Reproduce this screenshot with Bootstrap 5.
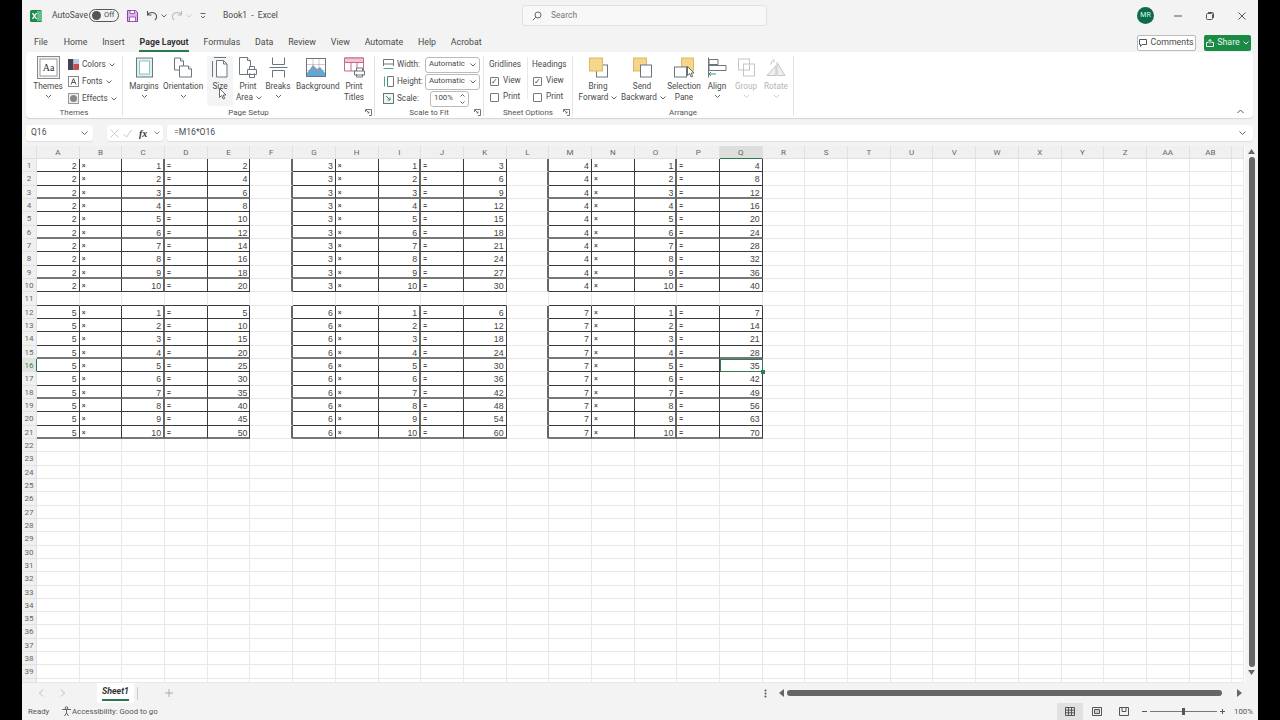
<!DOCTYPE html>
<html lang="en"><head><meta charset="utf-8"><title>Book1 - Excel</title>
<link href="https://cdn.jsdelivr.net/npm/bootstrap@5.3.0/dist/css/bootstrap.min.css" rel="stylesheet">
<style>
html,body{height:720px;overflow:hidden;background:#000}
body{font-family:Roboto,"Liberation Sans",sans-serif;font-size:8.5px;color:#4a4a4a;line-height:1.1}
svg{display:block;flex:none}
.xl-app{width:1236px;height:720px;background:#f3f3f3;margin:0 auto;position:relative}
.t-bar{height:31px;padding-left:8px}
.t-bar>*{flex:none}
.as-label{width:37px}
.as-toggle{width:30px;height:13px;border:1px solid #555;border-radius:7px;padding:0 2px;gap:3px;font-size:7.5px}
.as-knob{width:9px;height:9px;border-radius:50%;background:#555}
.t-doc{width:299px}
.t-search{width:245px;height:21px;background:#f8f8f8;border:1px solid #e2e2e2;border-radius:3px;padding-left:9px;gap:9px;color:#777}
.t-avatar{width:17px;height:17px;border-radius:50%;background:#0f6a4b;color:#cfe;font-size:7px;margin-left:370px}
.t-ctl{width:32px}
.tabs-bar{height:21px;padding-left:5.500px}
.rtab{padding:0 7.450px;height:21px;line-height:22px;flex:none;font-size:8.8px}
.rtab-on{font-weight:700;position:relative;color:#333}
.rtab-on::after{content:"";position:absolute;left:7px;right:7px;bottom:0;height:2px;background:#2b7a4b}
.act-btn{height:16px;border-radius:2px;gap:3px;flex:none;font-size:8.8px;margin-top:2px}
.act-cm{width:59px;border:1px solid #bbb;background:#fff;margin-left:auto}
.act-sh{width:47px;background:#1b8a45;color:#e6f5ea;margin:2px 7px 0 8px}
.rb{height:66px;background:#fff;margin:0 5px 0 4px;border-radius:4px;box-shadow:0 1px 1px #d4d4d4;position:relative}
.rb-grp{height:60px;margin-top:4px;border-right:1px solid #e3e3e3;flex:none;position:relative}
.rb-items{height:50px}
.rb-name{height:10px;text-align:center;color:#555;font-size:8px;line-height:14px;position:relative}
.rb-launch{position:absolute;right:2px;top:3px}
.rb-big{flex:none;text-align:center;font-size:8.2px;line-height:11px}
.rb-big>svg:first-child{margin:0 auto 2px;height:23px}
.rb-hover{background:#f4f4f4;border-radius:2px}
.rb-off{color:#b5b5b5}
.rb-row{height:17px;gap:3px;white-space:nowrap;font-size:8.2px}
.rb-combo{border:1px solid #bbb;border-radius:3px;height:16px;background:#fff;padding:0 3px;font-size:7.800px}
.rb-chk{gap:4px;height:16px;font-size:8.2px}
.rb-opt{font-size:8.2px}
.rb-box{width:9px;height:9px;border:1px solid #777;border-radius:1px;font-size:8px;line-height:7px;text-align:center;color:#444;background:#fff}
.chev{width:7px;height:5px;margin:2px auto 0}
.chev-in{display:inline;margin-left:3px}
.f-bar{height:16px;margin:7px 5px 5px 4px}
.f-box{background:#fff;height:16px;border-radius:3px;box-shadow:0 1px 1px #ddd;flex:none}
.f-name{width:67px;padding:0 5px}
.f-fx{width:56px;margin-left:14px;padding:0 3px;gap:4px;color:#333}
.f-fxt{font-family:"Liberation Serif",serif;font-size:10px;font-weight:700;margin:0 3px}
.f-text{margin-left:4px;flex:1;padding:0 7px;font-size:8.6px}
.x-grid{display:grid;width:1223px;grid-template-columns:15px repeat(28,42.7px) 12px;grid-template-rows:13px repeat(39,13.33px) 4px;background:#fff}
.x-c{border-right:1px solid #e8e8e8;border-bottom:1px solid #e8e8e8;font-family:"Liberation Sans",sans-serif;font-size:8.800px;line-height:14px;color:#444;padding:0 2px;white-space:nowrap;overflow:hidden;position:relative;text-align:right}
.x-op{text-align:left;font-size:6.500px;font-weight:700}
.x-hd{background:#f0f0f0;border-color:#e0e0e0;color:#666;text-align:center;font-family:Roboto,sans-serif;font-size:8px;padding:0;line-height:14px}
.x-sel{background:#dedede;color:#4f7460;border-bottom-color:#2b7a4b}
.x-selr{background:#dfe5df;color:#4f7460;border-right-color:#2b7a4b}
.x-dr{border-right-color:#3a3a3a}
.x-db{border-bottom-color:#3a3a3a}
.x-tr{border-right:2px solid #666}
.x-tb{border-bottom:2px solid #777}
.x-act{overflow:visible;outline:1.500px solid #2f7d50;outline-offset:-1px;z-index:2}
.x-act::after{content:"";position:absolute;right:-3px;bottom:-3px;width:4px;height:4px;background:#2f7d50}
.v-sb{width:13px;height:537px;background:#f3f3f3;padding:3px 0}
.v-thumb{width:6px;height:510px;background:#666;border-radius:3px;margin:3px auto}
.s-bar{height:20px}
.s-tab{width:37px;height:20px;background:#fff;margin-left:32px;text-align:center;font-style:italic;font-weight:700;color:#333;font-size:8.800px;line-height:17px;position:relative;border-radius:0 0 2px 2px}
.s-tab::after{content:"";position:absolute;left:5px;right:5px;bottom:2px;height:2px;background:#2b7a4b}
.h-thumb{width:435px;height:6px;border-radius:3px;background:#666}
.st-bar{height:17px;color:#555;font-size:7.800px}
.st-txt{padding-top:2px}
.st-view{width:26px;height:17px}
.st-on{background:#e1e1e1}
.z-track{width:67px;height:1px;background:#777;position:relative}
.z-thumb{position:absolute;left:32px;top:-3px;width:3px;height:7px;background:#555}
.cur{position:absolute;z-index:5}
</style></head>
<body>
<div class="xl-app d-flex flex-column">
 <!-- title bar -->
 <div class="t-bar d-flex align-items-center">
  <svg width="12" height="12" viewBox="0 0 12 12"><rect width="12" height="12" rx="1.500" fill="#1d8a4c"/><rect x="7" y="1" width="5" height="10" fill="#61c08a"/><path d="M2.500 3.200 6.500 8.800M6.500 3.200 2.500 8.800" stroke="#fff" stroke-width="1.300"/></svg>
  <span class="as-label" style="margin-left:10px">AutoSave</span>
  <span class="as-toggle d-flex align-items-center"><span class="as-knob"></span>Off</span>
  <svg style="margin-left:8px" width="11" height="12" viewBox="0 0 11 12"><path d="M.5.500h8l2 2v9H.5z" fill="#d9b8e8" stroke="#8b3fa8"/><path d="M3 .5h4.500v3H3zM2.500 7h6v4.500h-6z" fill="#fff" stroke="#8b3fa8" stroke-width=".8"/></svg>
  <svg style="margin-left:8px" width="12" height="11" viewBox="0 0 12 11" fill="none" stroke="#555" stroke-width="1.100"><path d="M1.500 1v4h4M1.500 5C3 2 8 1.500 10 4.500c1 2 .5 4-1 5.500"/></svg>
  <svg style="margin-left:3px" width="6" height="4" viewBox="0 0 6 4" fill="none" stroke="#666"><path d="m.5.500 2.500 2.500L5.500.5"/></svg>
  <svg style="margin-left:4px" width="12" height="11" viewBox="0 0 12 11" fill="none" stroke="#bbb" stroke-width="1.100"><path d="M10.500 1v4h-4M10.500 5C9 2 4 1.500 2 4.500c-1 2-.5 4 1 5.500"/></svg>
  <svg style="margin-left:3px" width="6" height="4" viewBox="0 0 6 4" fill="none" stroke="#ccc"><path d="m.5.500 2.500 2.500L5.500.5"/></svg>
  <svg style="margin-left:8px" width="6" height="6" viewBox="0 0 6 6" fill="none" stroke="#666"><path d="M.5.500h5M1 3l2 2 2-2"/></svg>
  <span class="t-doc" style="margin-left:17px">Book1 &nbsp;-&nbsp; Excel</span>
  <div class="t-search d-flex align-items-center"><svg width="10" height="10" viewBox="0 0 10 10" fill="none" stroke="#666"><circle cx="6" cy="4" r="3"/><path d="M3.800 6.200 .8 9.200"/></svg>Search</div>
  <div class="t-avatar d-flex align-items-center justify-content-center">MR</div>
  <div class="t-ctl ms-2 d-flex justify-content-center"><svg width="8" height="8" viewBox="0 0 8 8"><path d="M0 4h8" stroke="#555"/></svg></div>
  <div class="t-ctl d-flex justify-content-center"><svg width="8" height="8" viewBox="0 0 8 8" fill="none" stroke="#555"><rect x=".5" y="1.500" width="6" height="6" rx="1"/><path d="M2 .5h4.500a1 1 0 0 1 1 1V6"/></svg></div>
  <div class="t-ctl d-flex justify-content-center"><svg width="8" height="8" viewBox="0 0 8 8"><path d="m.5.500 7 7M7.500.500l-7 7" stroke="#555"/></svg></div>
 </div>
 <!-- tabs -->
 <div class="tabs-bar d-flex align-items-center">
  <span class="rtab" style="margin-left:-1px">File</span><span class="rtab" style="margin-left:1px">Home</span><span class="rtab">Insert</span><span class="rtab rtab-on">Page Layout</span><span class="rtab">Formulas</span><span class="rtab">Data</span><span class="rtab">Review</span><span class="rtab">View</span><span class="rtab">Automate</span><span class="rtab">Help</span><span class="rtab">Acrobat</span>
  <div class="act-btn act-cm d-flex align-items-center justify-content-center"><svg width="8" height="8" viewBox="0 0 8 8" fill="none" stroke="#555"><path d="M.5.500h7v5H3L1.500 7.500v-2h-1z"/></svg>Comments</div>
  <div class="act-btn act-sh d-flex align-items-center justify-content-center"><svg width="8" height="8" viewBox="0 0 8 8" fill="none" stroke="#e6f5ea"><path d="M.5 3.500h2M5.500 3.500h2v4h-7v-4M2 2.500l2-2 2 2M4 .5v4"/></svg>Share<svg width="6" height="4" viewBox="0 0 6 4" fill="none" stroke="#e6f5ea"><path d="m.5.500 2.500 2.500L5.500.5"/></svg></div>
 </div>
 <!-- ribbon -->
 <div class="rb d-flex">
  <div class="rb-grp" style="width:97px">
   <div class="rb-items d-flex">
    <div class="rb-big" style="width:38px;margin-left:3px">
     <svg width="23" height="23" viewBox="0 0 23 23"><rect x=".5" y=".5" width="22" height="22" fill="#f4f4f4" stroke="#888"/><rect x="3" y="3" width="17" height="17" fill="#fff" stroke="#999"/><text x="11.500" y="15" text-anchor="middle" font-size="10" font-family="Liberation Serif" fill="#333">Aa</text></svg>
     Themes<svg class="chev" viewBox="0 0 7 5" fill="none" stroke="#666"><path d="m1 1 2.500 2.500L6 1"/></svg>
    </div>
    <div style="margin-left:1px">
     <div class="rb-row d-flex align-items-center"><svg width="11" height="11" viewBox="0 0 11 11"><rect width="5.500" height="11" fill="#445"/><rect x="5.500" width="5.500" height="5" fill="#bcd"/><rect x="5.500" y="5" width="5.500" height="6" fill="#c0504d"/></svg>Colors<svg width="6" height="4" viewBox="0 0 6 4" fill="none" stroke="#666"><path d="m.5.500 2.500 2.500L5.500.5"/></svg></div>
     <div class="rb-row d-flex align-items-center"><svg width="11" height="11" viewBox="0 0 11 11"><rect x=".5" y=".5" width="10" height="10" fill="#fff" stroke="#888"/><path d="M3 8.500 5.500 2.500 8 8.500M4 6.500h3" fill="none" stroke="#555"/></svg>Fonts<svg width="6" height="4" viewBox="0 0 6 4" fill="none" stroke="#666"><path d="m.5.500 2.500 2.500L5.500.5"/></svg></div>
     <div class="rb-row d-flex align-items-center"><svg width="11" height="11" viewBox="0 0 11 11"><rect x=".5" y=".5" width="10" height="10" fill="#eee" stroke="#999"/><circle cx="5.500" cy="5.500" r="3.500" fill="#888"/></svg>Effects<svg width="6" height="4" viewBox="0 0 6 4" fill="none" stroke="#666"><path d="m.5.500 2.500 2.500L5.500.5"/></svg></div>
    </div>
   </div>
   <div class="rb-name">Themes</div>
  </div>
  <div class="rb-grp" style="width:252px">
   <div class="rb-items d-flex" style="padding-left:2px">
    <div class="rb-big" style="width:38px"><svg width="17" height="20" viewBox="0 0 17 20" fill="none"><rect x=".5" y=".5" width="16" height="19" fill="#dff0f0" stroke="#6b7680"/><rect x="3.500" y="3.500" width="10" height="13" fill="#fff" stroke="#8fc4c4"/></svg>Margins<svg class="chev" viewBox="0 0 7 5" fill="none" stroke="#666"><path d="m1 1 2.500 2.500L6 1"/></svg></div>
    <div class="rb-big" style="width:40px"><svg width="20" height="20" viewBox="0 0 20 20" fill="#fff" stroke="#6b7680"><path d="M1.500.5h6l3 3v9h-9z"/><path d="M7.500.5v3h3"/><path d="M6.500 8.500h9l3 3v8h-12z"/><path d="M15.500 8.500v3h3"/></svg>Orientation<svg class="chev" viewBox="0 0 7 5" fill="none" stroke="#666"><path d="m1 1 2.500 2.500L6 1"/></svg></div>
    <div class="rb-big rb-hover" style="width:26px;margin:0 3px 0 4px"><svg width="16" height="21" viewBox="0 0 16 21" fill="none" stroke="#6b7680"><path d="M2 .5h12M.5 4v16"/><path d="M4.500 3.500h7l3.500 3.500v13H4.500z" fill="#fff"/><path d="M11.500 3.500V7H15"/></svg>Size</div>
    <div class="rb-big" style="width:24px"><svg width="19" height="21" viewBox="0 0 19 21" fill="#fff" stroke="#6b7680"><path d="M.5.500h8l3 3v14H.5z"/><path d="M8.500.5v3h3"/><path d="M8.500 12.500h9v5h-9zM10.500 12.500v-3h5v3M10.500 16.500v4h5v-4"/></svg>Print<br><span class="text-nowrap">Area<svg class="chev-in" width="6" height="4" viewBox="0 0 6 4" fill="none" stroke="#666"><path d="m.5.500 2.500 2.500L5.500.5"/></svg></span></div>
    <div class="rb-big" style="width:36px"><svg width="19" height="21" viewBox="0 0 19 21" fill="none" stroke="#6b7680"><path d="M3.500.5v7h12v-7M3.500 20.500v-7h12v7M.5 10.500h18"/></svg>Breaks<svg class="chev" viewBox="0 0 7 5" fill="none" stroke="#666"><path d="m1 1 2.500 2.500L6 1"/></svg></div>
    <div class="rb-big" style="width:40px"><svg width="20" height="19" viewBox="0 0 20 19"><rect x=".5" y=".5" width="19" height="18" fill="#fff" stroke="#6b7680"/><path d="M1 15 7 7l4 4 3-2 5 6v3H1z" fill="#5aa9d6"/><path d="M7 1v17M13 1v17M1 6.500h18M1 12.500h18" stroke="#c88" stroke-width=".5"/></svg>Background</div>
    <div class="rb-big" style="width:36px"><svg width="21" height="20" viewBox="0 0 21 20" fill="#fff" stroke="#c26b86"><path d="M.5.500h19v13H.5z"/><path d="M.5 5h19M7 .5v13M13 .5v13"/><path d="M.5.500h19v4.500H.5z" fill="#efc5d0"/><g stroke="#6b7680"><path d="M10.500 13.500h10v4h-10zM12.500 13.500v-3h6v3M12.500 16.500v3h6v-3"/></g></svg>Print<br>Titles</div>
   </div>
   <div class="rb-name">Page Setup<svg class="rb-launch" width="7" height="7" viewBox="0 0 7 7" fill="none" stroke="#777"><path d="M.5 3V.5h6v6H4M1 1l3 3M2.500 4H4V2.500"/></svg></div>
  </div>
  <div class="rb-grp" style="width:109px">
   <div class="rb-items ps-2">
    <div class="rb-row d-flex align-items-center"><svg width="11" height="11" viewBox="0 0 11 11" fill="none" stroke="#6b7680"><path d="M.5 7V.5h10V7M.5 5h10"/><path d="M.5 9.500h10" stroke="#4a8"/></svg><span style="width:25px">Width:</span><span class="rb-combo d-flex align-items-center justify-content-between" style="width:55px">Automatic<svg width="6" height="4" viewBox="0 0 6 4" fill="none" stroke="#666"><path d="m.5.500 2.500 2.500L5.500.5"/></svg></span></div>
    <div class="rb-row d-flex align-items-center"><svg width="11" height="11" viewBox="0 0 11 11" fill="none" stroke="#6b7680"><path d="M4.500.5h6v10h-6z"/><path d="M1.500.5v10" stroke="#4a8"/></svg><span style="width:25px">Height:</span><span class="rb-combo d-flex align-items-center justify-content-between" style="width:55px">Automatic<svg width="6" height="4" viewBox="0 0 6 4" fill="none" stroke="#666"><path d="m.5.500 2.500 2.500L5.500.5"/></svg></span></div>
    <div class="rb-row d-flex align-items-center"><svg width="11" height="11" viewBox="0 0 11 11" fill="none" stroke="#6b7680"><rect x=".5" y=".5" width="10" height="10" fill="#eef6f4"/><path d="M3 3l4 4M7 4.500V7H4.500" stroke="#487"/></svg><span style="width:30px">Scale:</span><span class="rb-combo d-flex align-items-center justify-content-between" style="width:39px">100%<span class="d-flex flex-column gap-1"><svg width="5" height="3" viewBox="0 0 5 3" fill="none" stroke="#666"><path d="M.5 2.500l2-2 2 2"/></svg><svg width="5" height="3" viewBox="0 0 5 3" fill="none" stroke="#666"><path d="m.5.500 2 2 2-2"/></svg></span></span></div>
   </div>
   <div class="rb-name">Scale to Fit<svg class="rb-launch" width="7" height="7" viewBox="0 0 7 7" fill="none" stroke="#777"><path d="M.5 3V.5h6v6H4M1 1l3 3M2.500 4H4V2.500"/></svg></div>
  </div>
  <div class="rb-grp" style="width:89px">
   <div class="rb-items d-flex rb-opt" style="padding:1px 0 0 5px">
    <div style="width:39px;border-right:1px solid #e9e9e9;height:42px">
     <div style="height:16px;line-height:14px">Gridlines</div>
     <div class="rb-chk d-flex align-items-center" style="padding-left:1px"><span class="rb-box">✓</span>View</div>
     <div class="rb-chk d-flex align-items-center" style="padding-left:1px"><span class="rb-box"></span>Print</div>
    </div>
    <div style="padding-left:4px">
     <div style="height:16px;line-height:14px">Headings</div>
     <div class="rb-chk d-flex align-items-center" style="padding-left:1px"><span class="rb-box">✓</span>View</div>
     <div class="rb-chk d-flex align-items-center" style="padding-left:1px"><span class="rb-box"></span>Print</div>
    </div>
   </div>
   <div class="rb-name">Sheet Options<svg class="rb-launch" width="7" height="7" viewBox="0 0 7 7" fill="none" stroke="#777"><path d="M.5 3V.5h6v6H4M1 1l3 3M2.500 4H4V2.500"/></svg></div>
  </div>
  <div class="rb-grp" style="width:221px">
   <div class="rb-items d-flex" style="padding-left:2px">
    <div class="rb-big" style="width:46px"><svg width="19" height="20" viewBox="0 0 19 20"><rect x="7.500" y="7.500" width="11" height="12" fill="#fff" stroke="#6b7680"/><rect x=".5" y=".5" width="13" height="13" fill="#f6d68a" stroke="#e0b860"/></svg>Bring<br>Forward<svg class="chev-in" width="6" height="4" viewBox="0 0 6 4" fill="none" stroke="#666"><path d="m.5.500 2.500 2.500L5.500.5"/></svg></div>
    <div class="rb-big" style="width:42px"><svg width="19" height="20" viewBox="0 0 19 20"><rect x=".5" y=".5" width="13" height="13" fill="#f6d68a" stroke="#e0b860"/><rect x="7.500" y="7.500" width="11" height="12" fill="#fff" stroke="#6b7680"/></svg>Send<br><span class="text-nowrap">Backward<svg class="chev-in" width="6" height="4" viewBox="0 0 6 4" fill="none" stroke="#666"><path d="m.5.500 2.500 2.500L5.500.5"/></svg></span></div>
    <div class="rb-big" style="width:42px"><svg width="20" height="20" viewBox="0 0 20 20"><rect x="7.500" y=".5" width="12" height="13" fill="#f6d68a" stroke="#e0b860"/><rect x=".5" y="9.500" width="12" height="10" fill="#fff" stroke="#6b7680"/></svg>Selection<br>Pane</div>
    <div class="rb-big" style="width:24px"><svg width="19" height="21" viewBox="0 0 19 21" fill="#fff" stroke="#6b7680"><path d="M.5.500v20"/><path d="M1 2.500h9v5H1zM1 8.500h17v5H1z"/><path d="M1 17h7M3 15l-2 2 2 2" stroke="#3a9a6a" fill="none"/></svg>Align<svg class="chev" viewBox="0 0 7 5" fill="none" stroke="#666"><path d="m1 1 2.500 2.500L6 1"/></svg></div>
    <div class="rb-big rb-off" style="width:34px"><svg width="19" height="20" viewBox="0 0 19 20" fill="none" stroke="#c6c6c6"><rect x="1.500" y="1.500" width="11" height="11"/><rect x="6.500" y="6.500" width="11" height="12"/></svg>Group<svg class="chev" viewBox="0 0 7 5" fill="none" stroke="#ccc"><path d="m1 1 2.500 2.500L6 1"/></svg></div>
    <div class="rb-big rb-off" style="width:26px"><svg width="20" height="20" viewBox="0 0 20 20" fill="#eee" stroke="#c6c6c6"><path d="M1 18 10 8v10zM11 5l8 13h-8z"/><path d="M5 7a5 5 0 0 1 3-5M8 2v3" fill="none"/></svg>Rotate<svg class="chev" viewBox="0 0 7 5" fill="none" stroke="#ccc"><path d="m1 1 2.500 2.500L6 1"/></svg></div>
   </div>
   <div class="rb-name">Arrange</div>
  </div>
  <svg class="align-self-end" style="margin:0 9px 4px auto" width="7" height="5" viewBox="0 0 7 5" fill="none" stroke="#555"><path d="m.5 4 3-3 3 3"/></svg>
 </div>
 <!-- formula bar -->
 <div class="f-bar d-flex">
  <div class="f-box f-name d-flex align-items-center justify-content-between">Q16<svg width="7" height="4" viewBox="0 0 7 4" fill="none" stroke="#666"><path d="m.5.500 3 3 3-3"/></svg></div>
  <div class="f-box f-fx d-flex align-items-center"><svg width="9" height="9" viewBox="0 0 9 9" stroke="#c8c8c8" fill="none"><path d="m.5.500 8 8M8.500.500l-8 8"/></svg><svg width="9" height="9" viewBox="0 0 9 9" stroke="#c8c8c8" fill="none"><path d="m.5 5 3 3 5-7"/></svg><i class="f-fxt">fx</i><svg width="6" height="4" viewBox="0 0 6 4" fill="none" stroke="#888"><path d="m.5.500 2.500 2.500L5.500.5"/></svg></div>
  <div class="f-box f-text d-flex align-items-center justify-content-between">=M16*O16<svg width="7" height="4" viewBox="0 0 7 4" fill="none" stroke="#666"><path d="m.5.500 3 3 3-3"/></svg></div>
 </div>
 <!-- sheet -->
 <div class="d-flex">
  <div class="x-grid" id="xg"></div>
  <div class="v-sb">
   <svg class="mx-auto" width="7" height="5" viewBox="0 0 7 5"><path d="M3.500 0 7 5H0z" fill="#666"/></svg>
   <div class="v-thumb"></div>
   <svg class="mx-auto" width="7" height="5" viewBox="0 0 7 5"><path d="M3.500 5 7 0H0z" fill="#666"/></svg>
  </div>
 </div>
 <!-- sheet tabs -->
 <div class="s-bar d-flex align-items-center">
  <svg style="margin-left:17px" width="5" height="8" viewBox="0 0 5 8" fill="none" stroke="#bbb"><path d="M4 .5.500 4 4 7.500"/></svg>
  <svg style="margin-left:16px" width="5" height="8" viewBox="0 0 5 8" fill="none" stroke="#bbb"><path d="M1 .5 4.500 4 1 7.500"/></svg>
  <div class="s-tab">Sheet1</div>
  <span style="width:1px;height:13px;background:#ccc;margin-left:3px"></span>
  <svg style="margin-left:27px" width="8" height="8" viewBox="0 0 8 8" stroke="#aaa"><path d="M4 0v8M0 4h8"/></svg>
  <svg style="margin-left:591px" width="3" height="9" viewBox="0 0 3 9" fill="#555"><circle cx="1.500" cy="1.500" r="1"/><circle cx="1.500" cy="4.500" r="1"/><circle cx="1.500" cy="7.500" r="1"/></svg>
  <svg style="margin-left:12px" width="5" height="8" viewBox="0 0 5 8"><path d="M5 0v8L0 4z" fill="#666"/></svg>
  <div class="h-thumb" style="margin-left:3px"></div>
  <svg style="margin-left:15px" width="5" height="8" viewBox="0 0 5 8"><path d="M0 0v8l5-4z" fill="#666"/></svg>
 </div>
 <!-- status -->
 <div class="st-bar d-flex align-items-center">
  <span class="st-txt" style="margin-left:6px;width:33px">Ready</span>
  <svg width="11" height="11" viewBox="0 0 11 11" fill="none" stroke="#666"><circle cx="5.500" cy="2" r="1.300"/><path d="M1 3.500h9M5.500 4v3M5.500 7l-2 3M5.500 7l2 3"/></svg>
  <span class="st-txt" style="width:985px;margin-left:0">Accessibility: Good to go</span>
  <div class="st-view st-on d-flex align-items-center justify-content-center"><svg width="10" height="9" viewBox="0 0 10 9" fill="none" stroke="#555"><path d="M.5.500h9v8h-9zM.5 3.200h9M.5 5.800h9M3.500.5v8M6.500.5v8"/></svg></div>
  <div class="st-view d-flex align-items-center justify-content-center" style="margin-left:1px"><svg width="10" height="9" viewBox="0 0 10 9" fill="none" stroke="#555"><path d="M.5.500h9v8h-9z"/><path d="M2.500 2.500h5v4h-5z" fill="#ccc"/></svg></div>
  <div class="st-view d-flex align-items-center justify-content-center" style="margin-left:1px"><svg width="10" height="9" viewBox="0 0 10 9" fill="none" stroke="#555"><path d="M.5.500h9v8h-9zM3 .5v4h4v-4"/></svg></div>
  <svg style="margin-left:5px" width="5" height="5" viewBox="0 0 5 5"><path d="M0 2.500h5" stroke="#555"/></svg>
  <div class="z-track" style="margin-left:3px"><div class="z-thumb"></div></div>
  <svg style="margin-left:3px" width="5" height="5" viewBox="0 0 5 5" stroke="#555"><path d="M0 2.500h5M2.500 0v5"/></svg>
  <span class="st-txt" style="margin-left:9px">100%</span>
 </div>
 <svg class="cur" style="left:197px;top:88px" width="8" height="12" viewBox="0 0 8 12"><path d="M.5.500v9l2.200-2 1.500 3.500 1.500-.6L4.200 7H7z" fill="#fff" stroke="#444" stroke-width=".8"/></svg>
 <svg class="cur" style="left:665px;top:66px" width="8" height="12" viewBox="0 0 8 12"><path d="M.5.500v9l2.200-2 1.500 3.500 1.500-.6L4.200 7H7z" fill="#fff" stroke="#444" stroke-width=".8"/></svg>
</div>
<script>
(function(){
 var g=document.getElementById('xg'),h='';
 var cols=[];for(var i=0;i<28;i++)cols.push(i<26?String.fromCharCode(65+i):'A'+String.fromCharCode(39+i));
 var mul=[[2,3,4],[5,6,7]];
 var thick={3:1,6:1,9:1,15:1,18:1,21:1};
 function inT(c,r){
  if(c<0||c>16||c%6===5)return false;
  return (r>=1&&r<=10)||(r>=12&&r<=21);
 }
 h+='<div class="x-c x-hd"></div>';
 for(i=0;i<28;i++)h+='<div class="x-c x-hd'+(i===16?' x-sel':'')+'">'+cols[i]+'</div>';
 h+='<div class="x-c x-hd"></div>';
 for(var r=1;r<=40;r++){
  h+='<div class="x-c x-hd'+(r===16?' x-selr':'')+'">'+(r<40?r:'')+'</div>';
  for(var c=0;c<29;c++){
   var cls='x-c',t='';
   if(inT(c,r)||inT(c+1,r))cls+=' x-dr';
   if(inT(c,r)||inT(c,r+1))cls+=' x-db';
   if(inT(c,r)&&thick[r])cls+=' x-tb';
   if((inT(c+1,r)&&c%6===5)||(inT(c,r)&&c%6===2))cls+=' x-tr';
   if(inT(c,r)){
    var tb=Math.floor(c/6),k=c%6,n=r>11?r-11:r,m=mul[r>11?1:0][tb];
    if(k===0)t=m;else if(k===1){t='×';cls+=' x-op';}else if(k===2)t=n;else if(k===3){t='=';cls+=' x-op';}else t=m*n;
    if(c===16&&r===16)cls+=' x-act';
   }
   h+='<div class="'+cls+'">'+t+'</div>';
  }
 }
 g.innerHTML=h;
})();
</script>
</body></html>
